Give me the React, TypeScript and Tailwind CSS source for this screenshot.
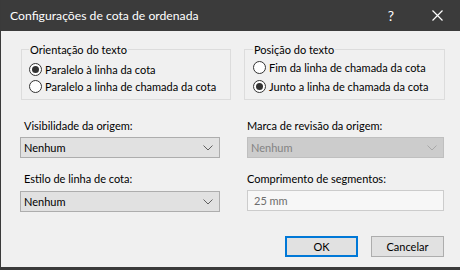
import React from "react";

function Radio({ checked, label }: { checked?: boolean; label: string }) {
  return (
    <label className="flex items-center h-[17px] whitespace-nowrap">
      <span className="w-[13px] h-[13px] rounded-full border border-[#333333] bg-white flex items-center justify-center shrink-0">
        {checked && <span className="w-[7px] h-[7px] rounded-full bg-[#333333]" />}
      </span>
      <span className="ml-[3px] leading-[15px]">{label}</span>
    </label>
  );
}

function Chevron({ color }: { color: string }) {
  return (
    <svg width="10" height="6" viewBox="0 0 10 6" className="shrink-0">
      <polyline points="0.5,0.5 5,5 9.5,0.5" fill="none" stroke={color} strokeWidth="1" />
    </svg>
  );
}

function Select({ value, disabled }: { value: string; disabled?: boolean }) {
  return (
    <div
      className={
        disabled
          ? "h-[21px] border border-[#bfbfbf] bg-[#cccccc] text-[#838383] flex items-center pl-[3px] pr-[6px]"
          : "h-[21px] border border-[#adadad] bg-[#e1e1e1] text-black flex items-center pl-[3px] pr-[6px]"
      }
    >
      <span className="flex-1 leading-[15px]">{value}</span>
      <Chevron color={disabled ? "#a8a8a8" : "#606060"} />
    </div>
  );
}

export default function App() {
  return (
    <div className="w-[460px] h-[270px] flex flex-col bg-[#f0f0f0] text-[11px] text-black border-l border-[#3a3a3a] overflow-hidden whitespace-nowrap font-[Lato]">
      <div className="h-[31px] shrink-0 bg-[#3b3b3b] text-white flex items-center pl-[9px]">
        <span className="flex-1 text-[12.2px] leading-[16px]">Configurações de cota de ordenada</span>
        <span className="w-[46px] text-center text-[14px] leading-[16px]">?</span>
        <span className="w-[46px] flex justify-center">
          <svg width="11" height="11" viewBox="0 0 11 11">
            <path d="M0.5 0.5 L10.5 10.5 M10.5 0.5 L0.5 10.5" stroke="white" strokeWidth="1.2" fill="none" />
          </svg>
        </span>
      </div>

      <div className="flex-1 flex flex-col pl-[19px] pr-[16px] pt-[11px]">
        <div className="flex">
          <fieldset className="w-[210px] min-w-0 h-[58px] border border-[#dcdcdc] px-[7px] pt-[4px] ml-[1px] shrink-0">
            <legend className="px-[1px] leading-[15px]">Orientação do texto</legend>
            <Radio checked label="Paralelo à linha da cota" />
            <Radio label="Paralelo a linha de chamada da cota" />
          </fieldset>
          <fieldset className="w-[201px] min-w-0 h-[58px] border border-[#dcdcdc] px-[8px] pt-[2px] ml-[13px] shrink-0">
            <legend className="px-[1px] leading-[15px]">Posição do texto</legend>
            <div className="flex flex-col gap-[2px]">
              <Radio label="Fim da linha de chamada da cota" />
              <Radio checked label="Junto a linha de chamada da cota" />
            </div>
          </fieldset>
        </div>

        <div className="flex mt-[18px]">
          <div className="w-[200px] flex flex-col shrink-0">
            <span className="pl-[4px] leading-[15px] mb-[4px]">Visibilidade da origem:</span>
            <Select value="Nenhum" />
            <span className="pl-[4px] leading-[15px] mt-[13px] mb-[5px]">Estilo de linha de cota:</span>
            <Select value="Nenhum" />
          </div>
          <div className="w-[197px] ml-[27px] flex flex-col shrink-0">
            <span className="leading-[15px] mb-[4px]">Marca de revisão da origem:</span>
            <Select value="Nenhum" disabled />
            <span className="leading-[15px] mt-[13px] mb-[4px]">Comprimento de segmentos:</span>
            <div className="h-[21px] border border-[#cccccc] bg-[#f7f7f7] text-[#6d6d6d] flex items-center pl-[6px]">
              <span className="leading-[15px]">25 mm</span>
            </div>
          </div>
        </div>

        <div className="flex justify-end mt-[24px]">
          <button className="w-[73px] h-[21px] border-2 border-[#0078d7] bg-[#e1e1e1] leading-[15px]">OK</button>
          <button className="w-[73px] h-[21px] border border-[#adadad] bg-[#e1e1e1] ml-[13px] leading-[15px]">Cancelar</button>
        </div>
      </div>
      <div className="h-[3px] shrink-0 bg-[#3a3a3a]" />
    </div>
  );
}
